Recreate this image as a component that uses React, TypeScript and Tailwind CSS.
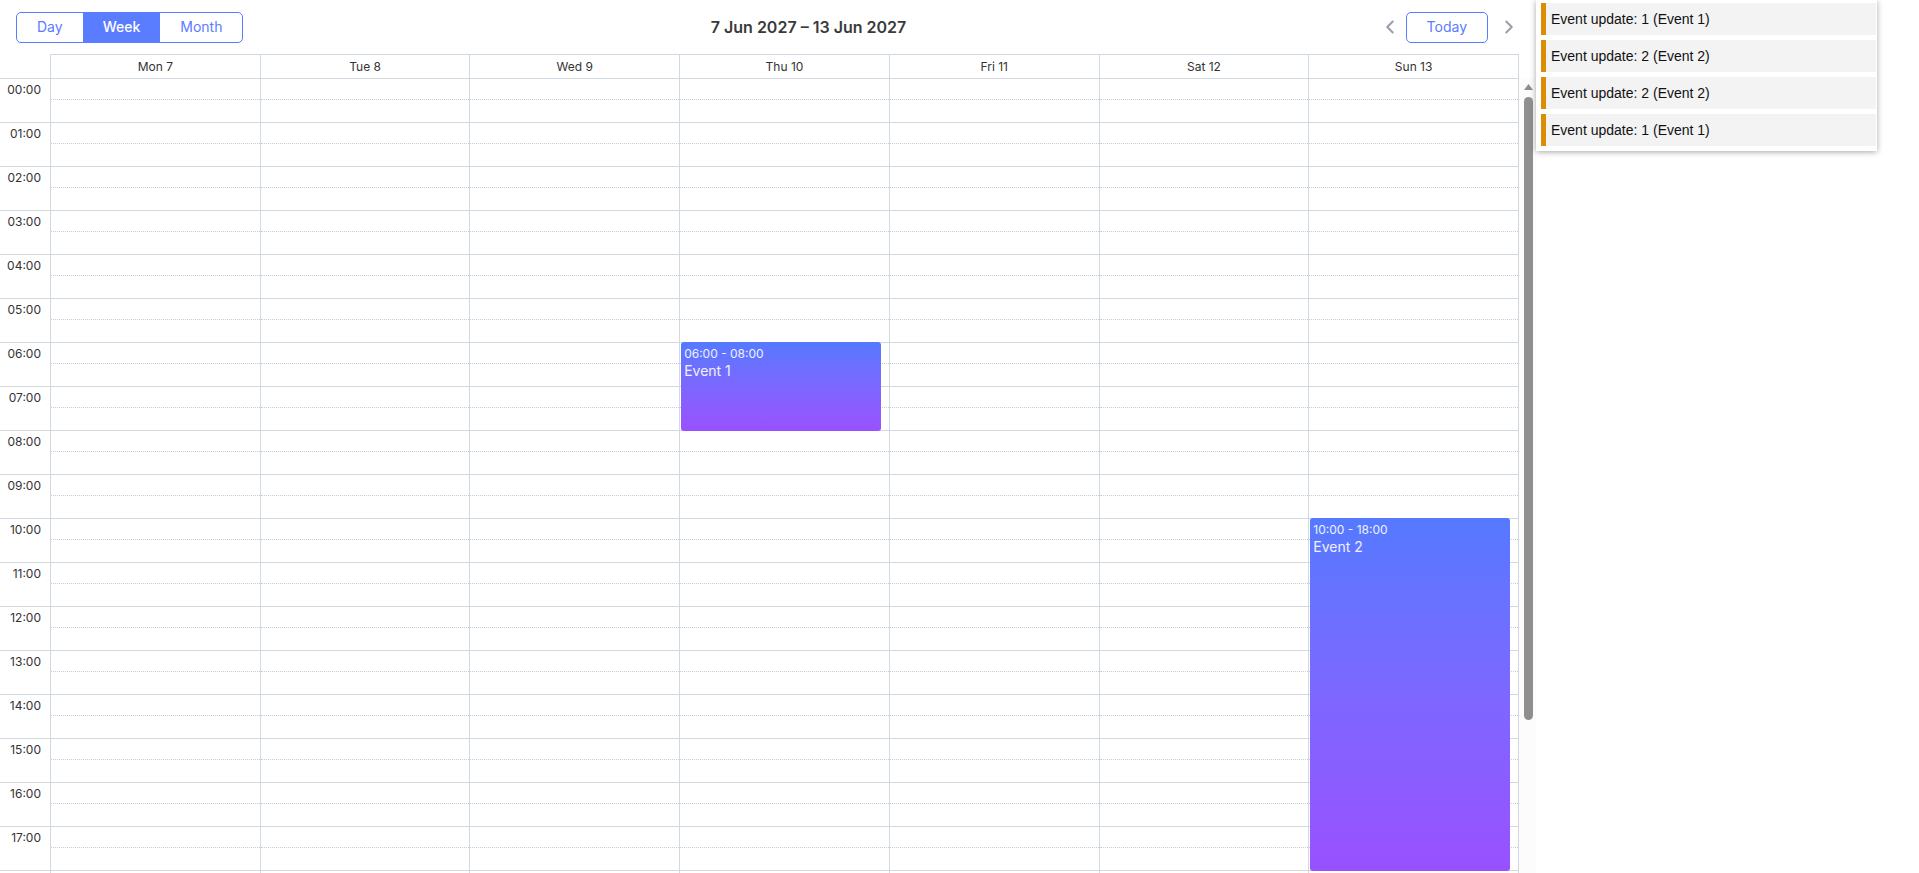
import React from 'react';
import { ChevronLeft, ChevronRight } from 'lucide-react';

// Week view with a small "event updates" feed on the right.
const days = ['Mon 7', 'Tue 8', 'Wed 9', 'Thu 10', 'Fri 11', 'Sat 12', 'Sun 13'];
// Only the rows that fit in the visible part of the scroller (00:00 – 17:00, plus the 18:00 line)
const hours = Array.from({ length: 18 }, (_, i) => `${String(i).padStart(2, '0')}:00`);

interface CalEvent {
  day: number;
  start: number;
  end: number;
  title: string;
}

const events: CalEvent[] = [
  { day: 3, start: 6, end: 8, title: 'Event 1' },
  { day: 6, start: 10, end: 18, title: 'Event 2' },
];

const updates = [
  'Event update: 1 (Event 1)',
  'Event update: 2 (Event 2)',
  'Event update: 2 (Event 2)',
  'Event update: 1 (Event 1)',
];

const HOUR = 44;
const fmt = (h: number) => `${String(h).padStart(2, '0')}:00`;

const Toolbar: React.FC = () => (
  <div className="h-[54px] flex items-center justify-between pl-4 pr-[11px]">
    <div className="flex h-[31px] border border-[#5a7cff] rounded-[5px] overflow-hidden text-sm">
      <button className="px-5 text-[#5a7cff]">Day</button>
      <button className="px-5 bg-[#5a7cff] text-white font-medium">Week</button>
      <button className="px-5 text-[#5a7cff]">Month</button>
    </div>
    <h2 className="text-base font-semibold text-[#3a3a3a]">7 Jun 2027 – 13 Jun 2027</h2>
    <div className="flex items-center">
      <button className="w-8 h-8 flex items-center justify-center text-[#9a9ea6]">
        <ChevronLeft size={22} strokeWidth={2.2} />
      </button>
      <button className="h-[31px] px-5 border border-[#5a7cff] rounded-[5px] text-sm text-[#5a7cff]">Today</button>
      <button className="ml-[5px] w-8 h-8 flex items-center justify-center text-[#9a9ea6]">
        <ChevronRight size={22} strokeWidth={2.2} />
      </button>
    </div>
  </div>
);

// Drawn copy of the browser's vertical scrollbar (track, arrow, thumb)
const FakeScrollbar: React.FC = () => (
  <div className="w-[17px] shrink-0 bg-[#fcfcfc] flex flex-col">
    <svg className="mt-[6px] ml-[5px]" width="9" height="6" viewBox="0 0 9 6">
      <path d="M4.5 0 L9 6 L0 6 Z" fill="#8d8d8d" />
    </svg>
    <div className="mt-[7px] ml-[5px] w-[9px] h-[623px] rounded-full bg-[#8f8f8f]" />
  </div>
);

const WeekGrid: React.FC = () => (
  <>
    {/* Day headers, right padding keeps them aligned with the scrolling body */}
    <div className="flex h-[24px] pl-[50px] pr-[17px]">
      <div className="flex-1 grid grid-cols-7 border-t border-r border-[#d0d9e2]">
        {days.map(d => (
          <div key={d} className="border-l border-[#d0d9e2] flex items-center justify-center text-xs text-[#333]">
            {d}
          </div>
        ))}
      </div>
    </div>

    <div className="h-[795px] flex overflow-hidden">
      <div className="flex-1 flex overflow-hidden">
        <div className="w-[50px] shrink-0">
          {hours.map(h => (
            <div key={h} className="h-[44px] border-t border-[#d0d9e2] pt-[3px] pr-[9px] text-right text-xs text-[#333]">
              {h}
            </div>
          ))}
          <div className="h-[44px] border-t border-[#d0d9e2]" />
        </div>
        <div className="flex-1 grid grid-cols-7 border-r border-[#d0d9e2] self-start">
          {days.map((d, di) => (
            <div key={d} className="relative border-l border-[#d0d9e2]">
              {hours.map(h => (
                <div key={h} className="h-[44px] border-t border-[#d0d9e2]">
                  <div className="h-[21px] border-b border-dotted border-[#bfcfdd]" />
                </div>
              ))}
              <div className="h-[44px] border-t border-[#d0d9e2]" />
              {events
                .filter(e => e.day === di)
                .map(e => (
                  <div
                    key={e.title}
                    className="absolute left-[1px] right-[8px] rounded-[3px] bg-linear-to-b from-[#5479ff] to-[#9950ff] px-[3px] pt-[4px] text-white/90"
                    style={{ top: e.start * HOUR, height: (e.end - e.start) * HOUR + 1 }}
                  >
                    <div className="text-xs leading-[15px]">
                      {fmt(e.start)} - {fmt(e.end)}
                    </div>
                    <div className="text-sm leading-[18px] mt-[1px]">{e.title}</div>
                  </div>
                ))}
            </div>
          ))}
        </div>
      </div>
      <FakeScrollbar />
    </div>
  </>
);

export default function App() {
  return (
    <div className="h-screen overflow-hidden bg-white flex items-start" style={{ fontFamily: 'Inter, "Noto Sans", sans-serif' }}>
      <div className="w-[1536px] shrink-0">
        <Toolbar />
        <WeekGrid />
      </div>
      <div
        className="w-[341px] bg-white pt-[3px] pb-[5px] pl-[5px] pr-px shadow-[0_1px_6px_rgba(0,0,0,0.35)] flex flex-col gap-[5px]"
        style={{ fontFamily: '"Liberation Sans", Arial, sans-serif' }}
      >
        {updates.map((u, i) => (
          <div key={i} className="h-[32px] flex items-center bg-[#f3f3f3] border-l-[5px] border-[#db8d03] pl-[5px] text-sm text-[#111]">
            {u}
          </div>
        ))}
      </div>
    </div>
  );
}
